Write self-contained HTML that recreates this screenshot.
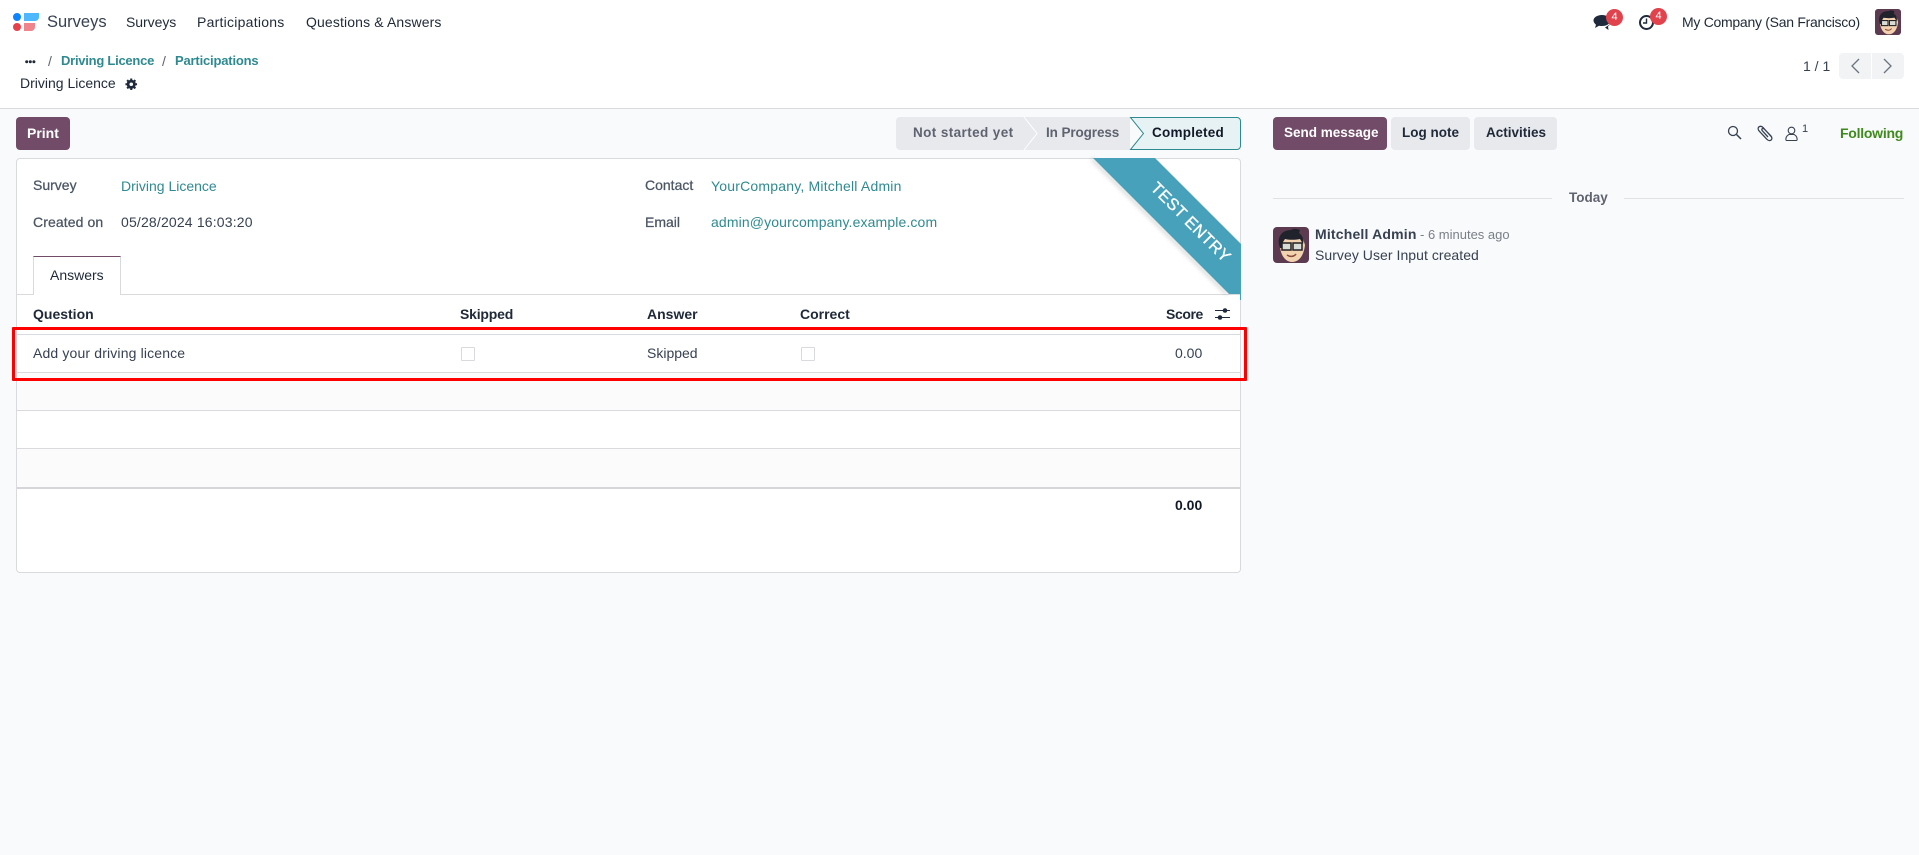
<!DOCTYPE html>
<html><head><meta charset="utf-8"><style>
html,body{margin:0;padding:0}
body{width:1919px;height:855px;background:#f9fafb;position:relative;overflow:hidden;font-family:"Liberation Sans",sans-serif;font-size:14px;color:#374151}
.t{position:absolute;line-height:20px;height:20px;white-space:nowrap}
.b{font-weight:bold}
.l{color:#2f8a90}
.g{color:#5f636f}
.d{color:#1f2937}
.m{color:#4b5563;-webkit-text-stroke:.25px #4b5563}
svg{position:absolute;overflow:visible}
.a{position:absolute}
</style></head><body>
<div class="a" style="left:0;top:0;width:1919px;height:108px;background:#fff;border-bottom:1px solid #d8dadd"></div>

<svg style="left:0;top:0" width="50" height="40">
<circle cx="17" cy="17" r="4" fill="#0a84ff"/><path d="M24 13h15v4a4 4 0 0 1-4 4H24z" fill="#4db8ff"/>
<circle cx="17" cy="27" r="4" fill="#e8404a"/><path d="M24 23h11v4a4 4 0 0 1-4 4h-7z" fill="#f0848c"/></svg>
<span class="t" style="left:47px;top:12px;font-size:16.5px;color:#374151">Surveys</span>
<span class="t d" style="left:126px;top:12px;letter-spacing:-.05px">Surveys</span>
<span class="t d" style="left:197px;top:12px;letter-spacing:.25px">Participations</span>
<span class="t d" style="left:306px;top:12px;letter-spacing:.13px">Questions &amp; Answers</span>

<svg style="left:1592px;top:13px" width="22" height="18"><path d="M10 2c5 0 8.500 2.500 8.500 5.500S15 13 10 13c-1 0-2 0-3-.3L3 15l1-3.300C2.500 10.500 1.500 9 1.500 7.500 1.500 4.500 5 2 10 2z" fill="#1f2a3d"/><path d="M13 14.500l3.500 2.500-.5-3.500 2.500-2.500z" fill="#1f2a3d"/></svg>
<div class="a" style="left:1606px;top:9px;width:17px;height:17px;border-radius:50%;background:#e2424c;color:#fff;font-size:11px;line-height:17px;text-align:center">4</div>
<svg style="left:1638px;top:14px" width="18" height="18"><circle cx="8.500" cy="8.500" r="6.500" fill="none" stroke="#1f2a3d" stroke-width="2"/><path d="M8.500 4.500v4.500H5" fill="none" stroke="#1f2a3d" stroke-width="1.400"/></svg>
<div class="a" style="left:1650px;top:8px;width:17px;height:17px;border-radius:50%;background:#e2424c;color:#fff;font-size:11px;line-height:17px;text-align:center">4</div>
<span class="t d" style="left:1682px;top:12px;letter-spacing:-.28px">My Company (San Francisco)</span>

<svg style="left:1875px;top:9px" width="26" height="26" viewBox="0 0 36 36"><rect width="36" height="36" rx="4" fill="#5c3a50"/><path d="M7 15C6 25 11 35 19 35s12-8 13-17l-2-6H10z" fill="#f3d2b0"/><path d="M7 21C3 10 9 3 18 3c3-2 7-1 9 0l-1 3c4 3 5 7 4 11l-3-5c-5 1-11 1-15 0l-2 3-1 6z" fill="#20232c"/><rect x="9" y="16" width="9" height="7" fill="#d9dcd6" stroke="#222" stroke-width="1.500"/><rect x="20" y="16" width="9" height="7" fill="#d9dcd6" stroke="#222" stroke-width="1.500"/><path d="M14 28c3 2 7 2 9-1" fill="none" stroke="#8a4a3a" stroke-width="1.500"/></svg>

<svg style="left:25px;top:60px" width="11" height="4"><circle cx="1.700" cy="1.800" r="1.500" fill="#1f2937"/><circle cx="5.300" cy="1.800" r="1.500" fill="#1f2937"/><circle cx="8.900" cy="1.800" r="1.500" fill="#1f2937"/></svg>
<span class="t g" style="left:48px;top:51px">/</span>
<span class="t l b" style="left:61px;top:51px;font-size:13px;letter-spacing:-.25px">Driving Licence</span>
<span class="t g" style="left:162px;top:51px">/</span>
<span class="t l b" style="left:175px;top:51px;font-size:13px;letter-spacing:-.18px">Participations</span>
<span class="t d" style="left:20px;top:73px">Driving Licence</span>
<svg style="left:125px;top:77.500px" width="12.500" height="12.500" viewBox="0 0 14 14"><circle cx="7" cy="7" r="3.600" fill="none" stroke="#1f2a3d" stroke-width="3"/><path d="M7 .5v13M.5 7h13M2.400 2.400l9.200 9.200M11.600 2.400l-9.200 9.200" stroke="#1f2a3d" stroke-width="2.300"/><circle cx="7" cy="7" r="2" fill="#fff"/></svg>

<span class="t" style="left:1803px;top:56px;color:#374151">1 / 1</span>
<div class="a" style="left:1839px;top:53px;width:32px;height:26px;background:#f2f3f5;border-radius:4px 0 0 4px"></div>
<div class="a" style="left:1872px;top:53px;width:32px;height:26px;background:#f2f3f5;border-radius:0 4px 4px 0"></div>
<svg style="left:1839px;top:53px" width="65" height="26"><path d="M20 6l-7 7 7 7M45 6l7 7-7 7" fill="none" stroke="#6b7280" stroke-width="1.300"/></svg>

<div class="a" style="left:16px;top:117px;width:54px;height:33px;border-radius:4px;background:#714b67"></div>
<span class="t b" style="left:27px;top:123px;color:#fff">Print</span>

<svg style="left:896px;top:117px" width="346" height="34">
<path d="M4 0H234V33H4a4 4 0 0 1-4-4V4a4 4 0 0 1 4-4z" fill="#e7e9ed"/>
<path d="M128 0l13 16.500L128 33" fill="none" stroke="#fff" stroke-width="1"/>
<path d="M234.500 .5H341a3.500 3.500 0 0 1 3.500 3.500v25a3.500 3.500 0 0 1-3.500 3.500H234.500l13-16z" fill="#e6f2f4" stroke="#2f8a90" stroke-width="1"/>
</svg>
<span class="t b" style="left:913px;top:123px;color:#5f636f;font-size:13.500px;letter-spacing:.4px">Not started yet</span>
<span class="t b" style="left:1046px;top:123px;color:#5f636f;font-size:13.500px;letter-spacing:-.1px">In Progress</span>
<span class="t b" style="left:1152px;top:123px;color:#111827;font-size:13.500px;letter-spacing:.25px">Completed</span>

<div class="a" style="left:16px;top:158px;width:1223px;height:413px;background:#fff;border:1px solid #d8dadd;border-radius:4px"></div>

<span class="t m" style="left:33px;top:175px">Survey</span>
<span class="t l" style="left:121px;top:176px">Driving Licence</span>
<span class="t m" style="left:33px;top:212px;letter-spacing:.1px">Created on</span>
<span class="t" style="left:121px;top:212px;letter-spacing:.17px">05/28/2024 16:03:20</span>
<span class="t m" style="left:645px;top:175px">Contact</span>
<span class="t l" style="left:711px;top:176px;letter-spacing:.2px">YourCompany, Mitchell Admin</span>
<span class="t m" style="left:645px;top:212px">Email</span>
<span class="t l" style="left:711px;top:212px;letter-spacing:.13px">admin@yourcompany.example.com</span>

<div class="a" style="left:17px;top:294px;width:1223px;height:1px;background:#d8dadd"></div>
<div class="a" style="left:33px;top:256px;width:86px;height:38px;background:#fff;border:1px solid #d8dadd;border-top:1px solid #714b67;border-bottom:0"></div>
<span class="t d" style="left:50px;top:265px">Answers</span>

<span class="t b d" style="left:33px;top:304px">Question</span>
<span class="t b d" style="left:460px;top:304px;letter-spacing:-.2px">Skipped</span>
<span class="t b d" style="left:647px;top:304px">Answer</span>
<span class="t b d" style="left:800px;top:304px">Correct</span>
<span class="t b d" style="left:1166px;top:304px;letter-spacing:-.4px">Score</span>
<svg style="left:1215px;top:307px" width="16" height="14"><path d="M0 3.500h15M0 10.500h15" stroke="#1f2a3d" stroke-width="1"/><circle cx="10" cy="3.500" r="2.300" fill="#1f2a3d"/><circle cx="5" cy="10.500" r="2.300" fill="#1f2a3d"/></svg>

<div class="a" style="left:17px;top:334px;width:1223px;height:1px;background:#d8dadd"></div>
<div class="a" style="left:17px;top:372px;width:1223px;height:1px;background:#d8dadd"></div>
<div class="a" style="left:17px;top:373px;width:1223px;height:37px;background:#fbfbfb"></div>
<div class="a" style="left:17px;top:410px;width:1223px;height:1px;background:#d8dadd"></div>
<div class="a" style="left:17px;top:448px;width:1223px;height:1px;background:#d8dadd"></div>
<div class="a" style="left:17px;top:449px;width:1223px;height:38px;background:#fbfbfb"></div>
<div class="a" style="left:17px;top:487px;width:1223px;height:2px;background:#d4d6da"></div>

<span class="t" style="left:33px;top:343px;letter-spacing:.15px">Add your driving licence</span>
<div class="a" style="left:461px;top:347px;width:12px;height:12px;border:1px solid #d8dadd;border-radius:1px;background:#fff"></div>
<span class="t" style="left:647px;top:343px">Skipped</span>
<div class="a" style="left:801px;top:347px;width:12px;height:12px;border:1px solid #d8dadd;border-radius:1px;background:#fff"></div>
<span class="t" style="left:1175px;top:343px">0.00</span>
<span class="t b d" style="left:1175px;top:495px;color:#111827">0.00</span>

<svg style="left:1085px;top:158px" width="160" height="145">
<defs><filter id="s" x="-20%" y="-20%" width="140%" height="140%"><feGaussianBlur stdDeviation="2"/></filter></defs>
<path d="M8 0L144 136H140L6 2z" fill="#000" opacity=".18" filter="url(#s)"/>
<path d="M8 0H70L156 86V142H155V136H144z" fill="#47a1bb"/>
<text x="105" y="65" transform="rotate(45 105 65)" text-anchor="middle" dominant-baseline="middle" fill="#fff" stroke="#fff" stroke-width=".3" font-family="Liberation Sans" font-size="16.500" letter-spacing=".3">TEST ENTRY</text>
</svg>

<div class="a" style="left:12px;top:327px;width:1229px;height:48px;border:3px solid #ff0000;border-radius:1px"></div>

<div class="a" style="left:1273px;top:117px;width:114px;height:33px;border-radius:4px;background:#714b67"></div>
<span class="t b" style="left:1284px;top:123px;color:#fff;font-size:13.500px">Send message</span>
<div class="a" style="left:1391px;top:117px;width:79px;height:33px;border-radius:4px;background:#e7e9ed"></div>
<span class="t b d" style="left:1402px;top:123px;font-size:13.500px">Log note</span>
<div class="a" style="left:1474px;top:117px;width:83px;height:33px;border-radius:4px;background:#e7e9ed"></div>
<span class="t b d" style="left:1486px;top:123px;font-size:13.500px">Activities</span>

<svg style="left:1727px;top:125px" width="15" height="15"><circle cx="6" cy="6" r="4.500" fill="none" stroke="#374151" stroke-width="1.300"/><path d="M9.500 9.500l4.500 4.500" stroke="#374151" stroke-width="1.500"/></svg>
<svg style="left:1757px;top:124px" width="17" height="18" viewBox="0 0 17 18"><path d="M15 13.500L6 3.500C4.500 2 2.800 2 1.800 3S1 5.800 2.300 7.200l7.500 8c1.500 1.500 3.300 1.800 4.400.7s.8-2.800-.5-4.200L7.500 5.300c-.8-.9-1.700-1-2.300-.5s-.4 1.500.4 2.300L11 13" fill="none" stroke="#374151" stroke-width="1.300"/></svg>
<svg style="left:1785px;top:126px" width="14" height="16"><circle cx="6.500" cy="4.500" r="3.300" fill="none" stroke="#374151" stroke-width="1.100"/><path d="M1.500 14.500h10c1 0 .8-3-.5-4.500l-1.800-1.500h-5.400L2 10c-1.300 1.500-1.500 4.500-.5 4.500z" fill="none" stroke="#374151" stroke-width="1.100"/></svg>
<span class="t" style="left:1802px;top:119px;font-size:11px;color:#374151">1</span>
<span class="t b" style="left:1840px;top:123px;color:#3f8a1c;letter-spacing:-.25px">Following</span>

<div class="a" style="left:1273px;top:198px;width:279px;height:1px;background:#e0e2e6"></div>
<span class="t b" style="left:1569px;top:188px;color:#5f636f;font-size:13.500px">Today</span>
<div class="a" style="left:1624px;top:198px;width:280px;height:1px;background:#e0e2e6"></div>

<svg style="left:1273px;top:227px" width="36" height="36" viewBox="0 0 36 36"><rect width="36" height="36" rx="4" fill="#5c3a50"/><path d="M7 15C6 25 11 35 19 35s12-8 13-17l-2-6H10z" fill="#f3d2b0"/><path d="M7 21C3 10 9 3 18 3c3-2 7-1 9 0l-1 3c4 3 5 7 4 11l-3-5c-5 1-11 1-15 0l-2 3-1 6z" fill="#20232c"/><rect x="9" y="16" width="9" height="7" fill="#d9dcd6" stroke="#222" stroke-width="1.500"/><rect x="20" y="16" width="9" height="7" fill="#d9dcd6" stroke="#222" stroke-width="1.500"/><path d="M14 28c3 2 7 2 9-1" fill="none" stroke="#8a4a3a" stroke-width="1.500"/></svg>
<span class="t b" style="left:1315px;top:224px;color:#374151;letter-spacing:.18px">Mitchell Admin</span>
<span class="t" style="left:1420px;top:225px;font-size:13px;color:#7a8088">- 6 minutes ago</span>
<span class="t" style="left:1315px;top:245px;letter-spacing:.05px">Survey User Input created</span>
</body></html>
